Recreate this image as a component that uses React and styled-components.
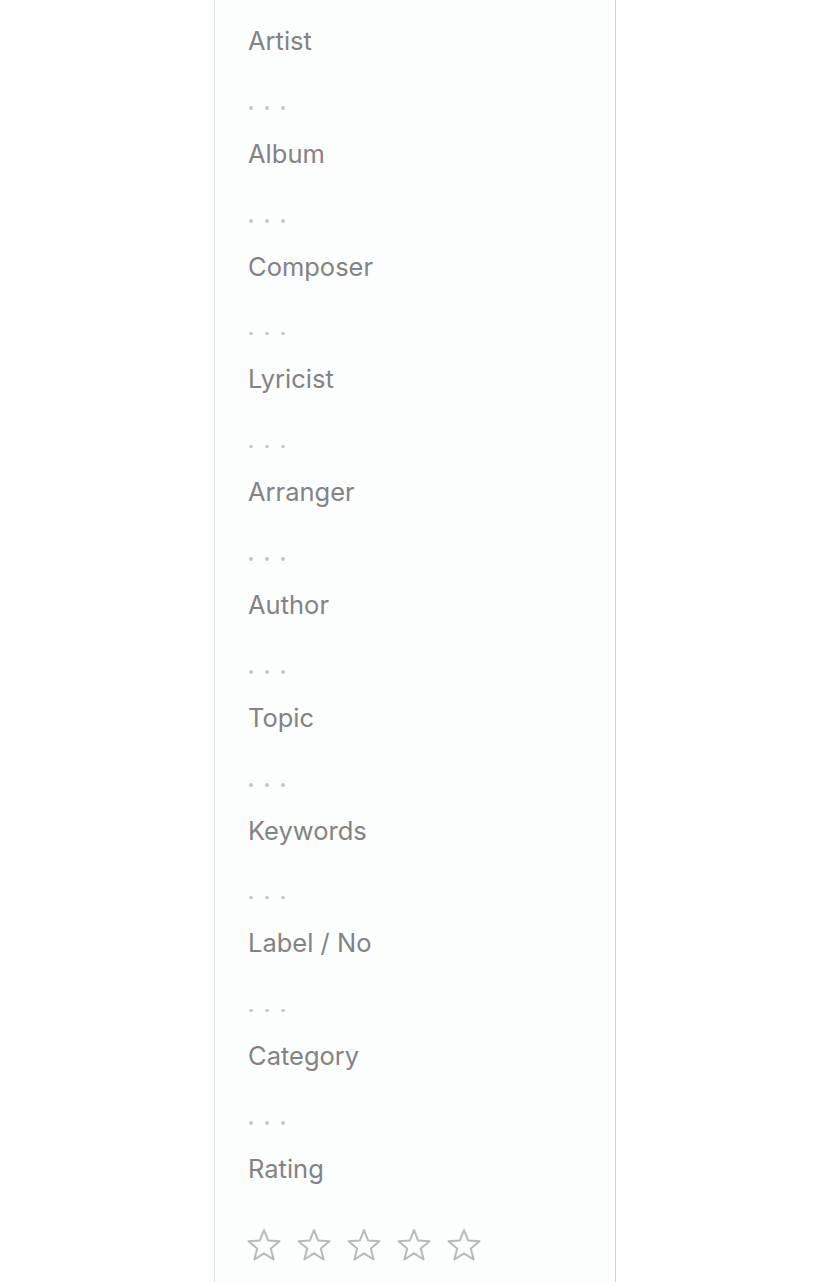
import React from 'react'
import styled, { createGlobalStyle } from 'styled-components'

const GlobalStyle = createGlobalStyle`
  body{
    margin:0;
    background:#ffffff;
    font-family: Inter, "Liberation Sans", sans-serif;
  }
`;

const fields = ['Artist','Album','Composer','Lyricist','Arranger','Author','Topic','Keywords','Label / No','Category'];

function Star(){
  return (
    <svg width="36" height="34" viewBox="0 0 36 34">
      <polygon
        points="18,2 22.2,12.6 33.5,13.2 24.8,20.4 27.6,31.5 18,25.3 8.4,31.5 11.2,20.4 2.5,13.2 13.8,12.6"
        fill="none"
        stroke="#b9b9b9"
        strokeWidth="2"
        strokeLinejoin="round"
      />
    </svg>
  )
}

export default function App() {
  return (
    <Page>
      <GlobalStyle />
      <Panel>
        {fields.map((f) => (
          <Field key={f}>
            <Label>{f}</Label>
            <Value>
              <Dot /><Dot /><Dot />
            </Value>
          </Field>
        ))}
        <Field>
          <Label>Rating</Label>
          <Stars>
            {[0,1,2,3,4].map((i) => <Star key={i} />)}
          </Stars>
        </Field>
      </Panel>
    </Page>
  )
}

const Page = styled.div`
  width:815px;
  height:1282px;
  overflow:hidden;
  display:flex;
`;

const Panel = styled.div`
  margin-left:214px;
  width:402px;
  min-height:1282px;
  background:#fcfdfd;
  border-left:1px solid #d9dcdc;
  border-right:1px solid #cfd2d2;
  padding:26px 0 0 33px;
  box-sizing:border-box;
  display:flex;
  flex-direction:column;
`;

const Field = styled.div`
  display:flex;
  flex-direction:column;
  margin-bottom:15.8px;
`;

const Label = styled.div`
  font-size:25.5px;
  line-height:30px;
  color:#838383;
`;

const Value = styled.div`
  height:30px;
  margin-top:37px;
  display:flex;
  align-items:center;
  gap:12.5px;
  padding-left:1px;
`;

const Dot = styled.span`
  width:3.5px;
  height:3.5px;
  border-radius:50%;
  background:#c9c9c9;
`;

const Stars = styled.div`
  margin-top:44px;
  display:flex;
  gap:14px;
  margin-left:-2px;
`;
